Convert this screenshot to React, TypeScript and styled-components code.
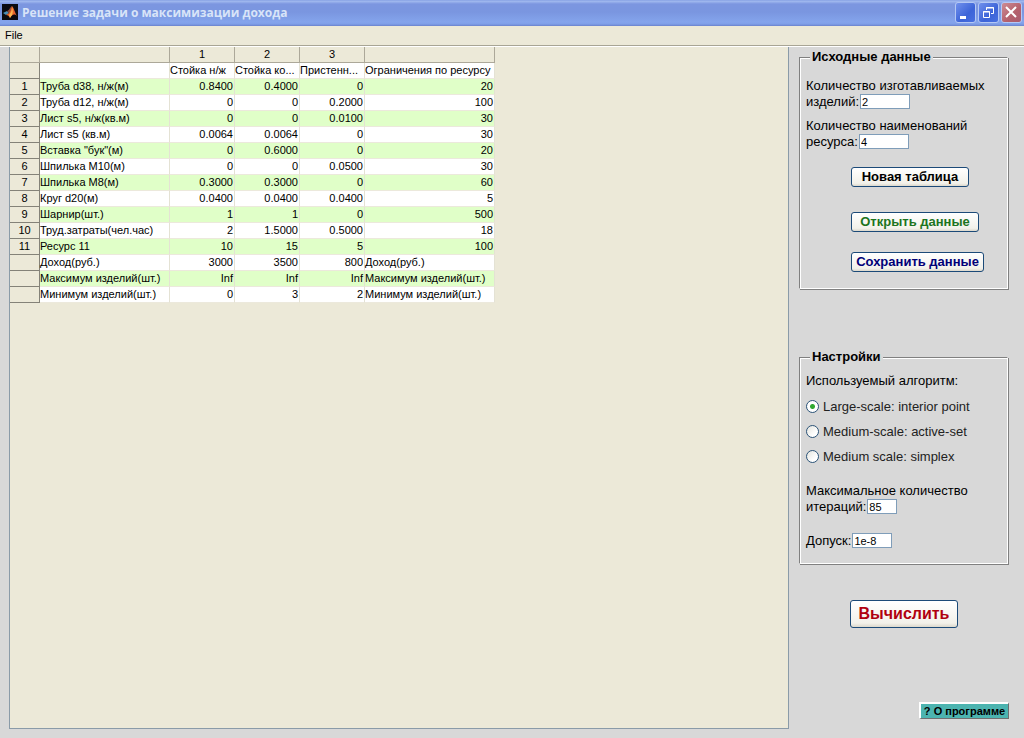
import React, { useState } from "react";
import styled, { createGlobalStyle } from "styled-components";

const Global = createGlobalStyle`
  * { box-sizing: border-box; }
  html, body, #root { height: 100%; }
  body {
    margin: 0;
    background: #d8d8d8;
    color: #000;
    font-family: "Liberation Sans", Arial, sans-serif;
    font-size: 11px;
  }
  button, input { font-family: inherit; color: inherit; margin: 0; }
`;

const Window = styled.div`
  display: flex;
  flex-direction: column;
  min-height: 100%;
`;

const TitleBar = styled.header`
  display: flex;
  align-items: center;
  height: 26px;
  flex: none;
  padding: 0 2px 2px;
  background: linear-gradient(#7a96df 0, #a4bcf0 1px, #7c96e0 4px, #7a96e0 12px, #84a4ec 22px, #7f9fe8 24px, #6a82cc 26px);
`;

const WindowTitle = styled.h1`
  flex: 1;
  margin: 0;
  padding: 2px 0 0 4px;
  color: #d8e4f8;
  font: 700 12px/24px "Open Sans", "Noto Sans", sans-serif;
`;

const WindowButtons = styled.div`
  display: flex;
  gap: 2px;
`;

const WindowButton = styled.button<{ $close?: boolean }>`
  width: 21px;
  height: 21px;
  padding: 0;
  border: 1px solid #b4c8f4;
  border-radius: 3px;
  background: ${(p) =>
    p.$close
      ? "linear-gradient(135deg, #cc8c94, #b4606c 60%, #a85c70)"
      : "linear-gradient(135deg, #7090ec, #3c64d8 60%, #4870e0)"};
  svg { display: block; }
`;

const MenuBar = styled.nav`
  flex: none;
  height: 20px;
  padding: 0 5px;
  background: #ece9d8;
  border-bottom: 1px solid #a8a595;
`;

const MenuItem = styled.button`
  padding: 0;
  border: 0;
  background: none;
  font-size: 11px;
  line-height: 18px;
`;

const Workspace = styled.main`
  display: flex;
  flex: 1;
  padding: 0 15px 9px 9px;
  border-top: 1px solid #fff;
`;

const TablePane = styled.section`
  flex: 1;
  margin-right: 10px;
  background: #ece9d8;
  border: 1px solid #8a9ba8;
  border-top: 0;
`;

const Grid = styled.table`
  border-collapse: separate;
  border-spacing: 0;
  table-layout: fixed;
  width: 485px;
  line-height: 15px;
`;

const Col = styled.col<{ $w: number }>`
  width: ${(p) => p.$w}px;
`;

const HeadCell = styled.th`
  height: 16px;
  padding: 0;
  border-right: 1px solid #aca899;
  border-bottom: 1px solid #aca899;
  background: #ece9d8;
  font-weight: 400;
  text-align: center;
`;

const RowHead = styled(HeadCell)`
  border-color: #848278;
`;

const Row = styled.tr<{ $green: boolean }>`
  background: ${(p) => (p.$green ? "#e0ffc8" : "#fff")};
`;

const Cell = styled.td<{ $num?: boolean }>`
  height: 16px;
  padding: ${(p) => (p.$num ? "0 1px" : "0")};
  border-right: 1px solid #e4e2d4;
  border-bottom: 1px solid #ece9dc;
  text-align: ${(p) => (p.$num ? "right" : "left")};
  white-space: nowrap;
`;

const Sidebar = styled.aside`
  display: flex;
  flex-direction: column;
  width: 210px;
  flex: none;
  padding-top: 2px;
`;

const Panel = styled.fieldset<{ $top: number; $bottom: number; $gap?: number }>`
  min-width: 0;
  margin: ${(p) => p.$gap ?? 0}px 1px 0 0;
  padding: ${(p) => p.$top}px 6px ${(p) => p.$bottom}px;
  border: 1px solid;
  border-color: #808080 #fff #fff #808080;
  box-shadow: 1px 1px 0 #808080, inset 1px 1px 0 #fff;
`;

const Legend = styled.legend`
  margin-left: 4px;
  padding: 0 2px;
  background: #d8d8d8;
  font-size: 13px;
  font-weight: 700;
  line-height: 16px;
`;

const Field = styled.label<{ $space: number }>`
  display: block;
  margin-bottom: ${(p) => p.$space}px;
  font-size: 13px;
  line-height: 16px;
`;

const FieldRow = styled.span`
  display: flex;
  height: 16px;
  gap: 1px;
`;

const TextBox = styled.input<{ $w: number }>`
  width: ${(p) => p.$w}px;
  height: 15px;
  padding: 0 1px;
  border: 1px solid #7f9db9;
  background: #fff;
  font-size: 11px;
`;

const ButtonStack = styled.div`
  display: flex;
  flex-direction: column;
  align-items: flex-start;
  padding-left: 45px;
`;

const PushButton = styled.button<{ $w: number; $color?: string; $space?: number }>`
  width: ${(p) => p.$w}px;
  height: 20px;
  margin-bottom: ${(p) => p.$space ?? 0}px;
  padding: 0;
  border: 1px solid #1c4a78;
  border-radius: 3px;
  background: linear-gradient(#fff, #f2f1ea 85%, #dcd8cc);
  color: ${(p) => p.$color ?? "#000"};
  font-size: 13px;
  font-weight: 700;
  line-height: 18px;
  white-space: nowrap;
`;

const ComputeButton = styled(PushButton)`
  height: 28px;
  margin: 36px 0 0 51px;
  font-size: 16px;
  line-height: 26px;
`;

const AboutButton = styled.button`
  align-self: flex-end;
  width: 90px;
  height: 17px;
  margin: auto 0 10px;
  padding: 0;
  border: solid;
  border-width: 2px 1px 1px 2px;
  border-color: #fff #707070 #707070 #fff;
  background: #4cb4b0;
  font-size: 11px;
  font-weight: 700;
  line-height: 14px;
  white-space: nowrap;
`;

const Caption = styled.div`
  margin-bottom: 9px;
  font-size: 13px;
  line-height: 16px;
`;

const RadioGroup = styled.div`
  display: flex;
  flex-direction: column;
  gap: 9px;
  margin-bottom: 19px;
`;

const RadioRow = styled.label`
  display: flex;
  align-items: center;
  gap: 4px;
  height: 16px;
  font-size: 13px;
  color: #222;
`;

const Radio = styled.input`
  appearance: none;
  width: 13px;
  height: 13px;
  border: 1px solid #2c5478;
  border-radius: 50%;
  background: linear-gradient(135deg, #e4e4de, #fff 70%);
  &:checked { background: radial-gradient(circle, #30a830 0 2px, #fff 3px); }
`;

const products = ["Стойка н/ж", "Стойка ко...", "Пристенн..."];
const rows: [string, string, string, string, string, string][] = [
  ["1", "Труба d38, н/ж(м)", "0.8400", "0.4000", "0", "20"],
  ["2", "Труба d12, н/ж(м)", "0", "0", "0.2000", "100"],
  ["3", "Лист s5, н/ж(кв.м)", "0", "0", "0.0100", "30"],
  ["4", "Лист s5 (кв.м)", "0.0064", "0.0064", "0", "30"],
  ["5", 'Вставка "бук"(м)', "0", "0.6000", "0", "20"],
  ["6", "Шпилька М10(м)", "0", "0", "0.0500", "30"],
  ["7", "Шпилька М8(м)", "0.3000", "0.3000", "0", "60"],
  ["8", "Круг d20(м)", "0.0400", "0.0400", "0.0400", "5"],
  ["9", "Шарнир(шт.)", "1", "1", "0", "500"],
  ["10", "Труд.затраты(чел.час)", "2", "1.5000", "0.5000", "18"],
  ["11", "Ресурс 11", "10", "15", "5", "100"],
  ["", "Доход(руб.)", "3000", "3500", "800", "Доход(руб.)"],
  ["", "Максимум изделий(шт.)", "Inf", "Inf", "Inf", "Максимум изделий(шт.)"],
  ["", "Минимум изделий(шт.)", "0", "3", "2", "Минимум изделий(шт.)"],
];
const algorithms = ["Large-scale: interior point", "Medium-scale: active-set", "Medium scale: simplex"];

const Logo = () => (
  <svg width="16" height="16" viewBox="0 0 16 16" aria-hidden="true">
    <rect width="16" height="16" fill="#0a0a10" />
    <path d="M1 9 L5 7 L7 9 L4 11 Z" fill="#4a90b8" />
    <path d="M5 7 C7 7 8 3 10 2 L8 9 L7 9 Z" fill="#8c4a3c" />
    <path d="M10 2 C12 4 13 9 15 12 C12 9 10 11 8 14 C7 12 6 11 4 11 L7 9 C8 8 9 5 10 2 Z" fill="#e8642c" />
    <path d="M10 3 C11 6 11 9 10 11 L8 14 L7 11 C9 9 10 6 10 3 Z" fill="#f8b850" />
  </svg>
);

export default function App() {
  const [algorithm, setAlgorithm] = useState(0);
  return (
    <Window>
      <Global />
      <TitleBar>
        <Logo />
        <WindowTitle>Решение задачи о максимизации дохода</WindowTitle>
        <WindowButtons>
          <WindowButton aria-label="Свернуть">
            <svg width="19" height="19"><path d="M4 13h6v3h-6z" fill="#fff" /></svg>
          </WindowButton>
          <WindowButton aria-label="Восстановить">
            <svg width="19" height="19" fill="none" stroke="#fff">
              <path d="M7.5 7V4.5h7v6H12M7 5h8M4.5 8.5h6v6h-6zM4 9h7" />
            </svg>
          </WindowButton>
          <WindowButton $close aria-label="Закрыть">
            <svg width="19" height="19"><path d="M4 4l10 10M14 4l-10 10" stroke="#fff" strokeWidth="2" /></svg>
          </WindowButton>
        </WindowButtons>
      </TitleBar>
      <MenuBar><MenuItem>File</MenuItem></MenuBar>
      <Workspace>
        <TablePane>
          <Grid>
            <colgroup>
              {[30, 130, 65, 65, 65, 130].map((w, i) => <Col key={i} $w={w} />)}
            </colgroup>
            <thead>
              <tr>{["", "", "1", "2", "3", ""].map((t, i) => <HeadCell key={i}>{t}</HeadCell>)}</tr>
            </thead>
            <tbody>
              <Row $green={false}>
                <RowHead />
                <Cell />
                {products.map((p) => <Cell key={p}>{p}</Cell>)}
                <Cell>Ограничения по ресурсу</Cell>
              </Row>
              {rows.map((r, i) => (
                <Row key={i} $green={i % 2 === 0}>
                  <RowHead scope="row">{r[0]}</RowHead>
                  <Cell>{r[1]}</Cell>
                  <Cell $num>{r[2]}</Cell>
                  <Cell $num>{r[3]}</Cell>
                  <Cell $num>{r[4]}</Cell>
                  <Cell $num={i < 11}>{r[5]}</Cell>
                </Row>
              ))}
            </tbody>
          </Grid>
        </TablePane>
        <Sidebar>
          <Panel $top={13} $bottom={16}>
            <Legend>Исходные данные</Legend>
            <Field $space={8}>
              Количество изготавливаемых
              <FieldRow>изделий:<TextBox $w={50} defaultValue="2" /></FieldRow>
            </Field>
            <Field $space={17}>
              Количество наименований
              <FieldRow>ресурса:<TextBox $w={50} defaultValue="4" /></FieldRow>
            </Field>
            <ButtonStack>
              <PushButton $w={118} $space={25}>Новая таблица</PushButton>
              <PushButton $w={128} $space={20} $color="#1c7420">Открыть данные</PushButton>
              <PushButton $w={133} $color="#000078">Сохранить данные</PushButton>
            </ButtonStack>
          </Panel>
          <Panel $top={8} $bottom={14} $gap={60}>
            <Legend>Настройки</Legend>
            <Caption>Используемый алгоритм:</Caption>
            <RadioGroup role="radiogroup" aria-label="Используемый алгоритм">
              {algorithms.map((a, i) => (
                <RadioRow key={a}>
                  <Radio type="radio" name="algorithm" checked={algorithm === i} onChange={() => setAlgorithm(i)} />
                  {a}
                </RadioRow>
              ))}
            </RadioGroup>
            <Field $space={18}>
              Максимальное количество
              <FieldRow>итераций:<TextBox $w={30} defaultValue="85" /></FieldRow>
            </Field>
            <Field $space={0}>
              <FieldRow>Допуск:<TextBox $w={40} defaultValue="1e-8" /></FieldRow>
            </Field>
          </Panel>
          <ComputeButton $w={108} $color="#b00010">Вычислить</ComputeButton>
          <AboutButton>? О программе</AboutButton>
        </Sidebar>
      </Workspace>
    </Window>
  );
}
